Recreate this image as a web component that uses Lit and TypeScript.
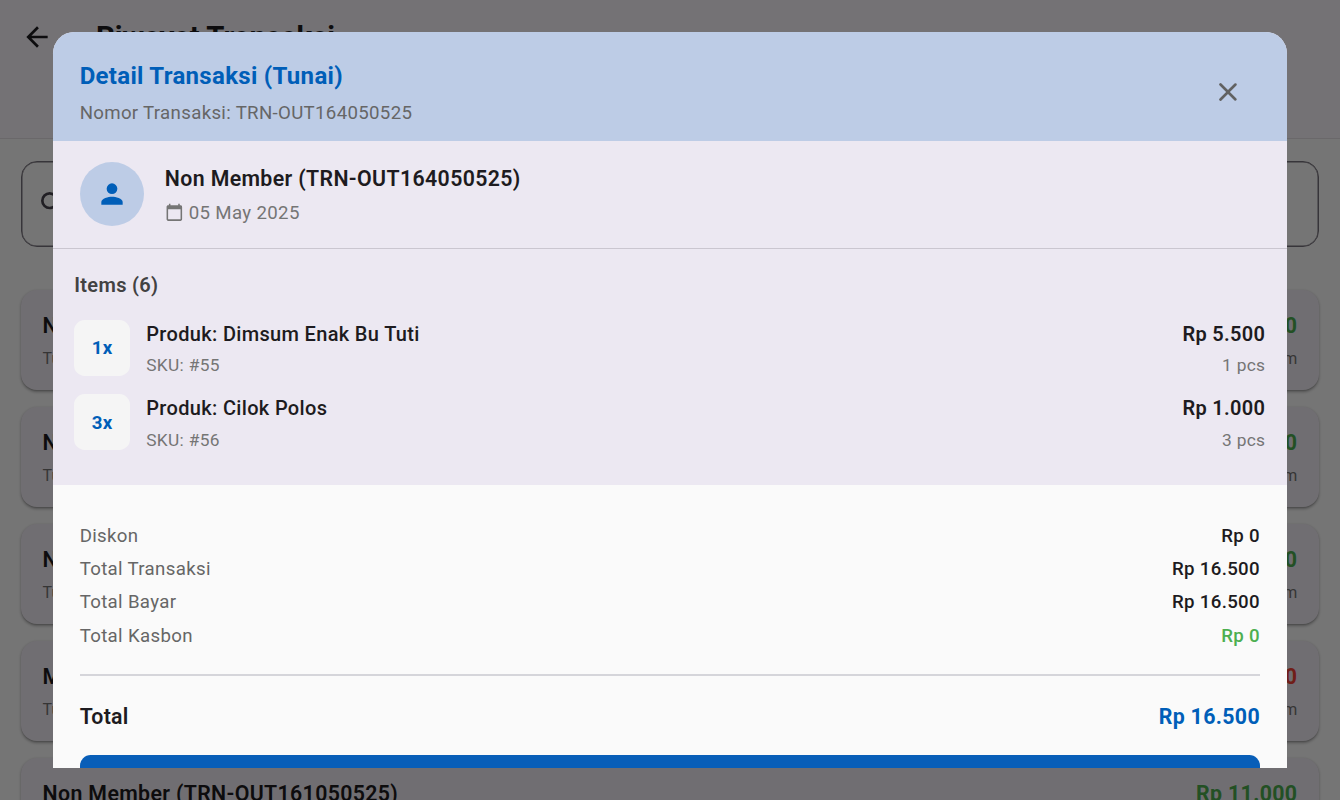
import { LitElement, html, css } from "lit";
import { customElement } from "lit/decorators.js";

interface Transaction {
  name: string;
  amount: string;
  debt?: boolean;
}

const transactions: Transaction[] = [
  { name: "Non Member (TRN-OUT165050525)", amount: "Rp 5.500" },
  { name: "Non Member (TRN-OUT164050525)", amount: "Rp 16.500" },
  { name: "Non Member (TRN-OUT163050525)", amount: "Rp 12.000" },
  { name: "Member (TRN-OUT162050525)", amount: "Rp 10.000", debt: true },
  { name: "Non Member (TRN-OUT161050525)", amount: "Rp 11.000" },
];

const items = [
  { qty: 1, name: "Produk: Dimsum Enak Bu Tuti", sku: "SKU: #55", price: "Rp 5.500" },
  { qty: 3, name: "Produk: Cilok Polos", sku: "SKU: #56", price: "Rp 1.000" },
];

const summary = [
  { label: "Diskon", value: "Rp 0" },
  { label: "Total Transaksi", value: "Rp 16.500" },
  { label: "Total Bayar", value: "Rp 16.500" },
  { label: "Total Kasbon", value: "Rp 0", paid: true },
];

@customElement("history-page")
export class HistoryPage extends LitElement {
  static styles = css`
    :host { display: block; background: #fff; color: #1d1b20; }
    * { box-sizing: border-box; }
    .bar {
      height: 139.3px; padding: 17px 26px 0 25px; background: #fdf9ff;
      border-bottom: 1.33px solid #e6e3e8; display: flex; align-items: flex-start; gap: 46px;
    }
    .back { width: 25px; height: 40px; display: flex; align-items: center; }
    .back svg { width: 32px; height: 32px; flex: none; margin-left: -4px; }
    .title { font-size: 29.33px; line-height: 40px; font-weight: 700; }
    .search {
      margin: 22px 21.3px 0; height: 85.3px; border: 1px solid #79747e; border-radius: 16px;
      box-shadow: inset 0 0 0 .5px #79747e;
      padding-left: 15px; display: flex; align-items: center; color: #49454f;
    }
    .search svg { width: 32px; height: 32px; }
    .list { padding: 43.3px 21.3px 0; display: flex; flex-direction: column; gap: 17px; }
    .card {
      height: 100px; border-radius: 16px; background: #f5f0f9; padding: 22px 21.3px 0;
      box-shadow: 0 1.5px 3px rgba(0,0,0,.3), 0 1px 1px rgba(0,0,0,.1);
    }
    .row { display: flex; justify-content: space-between; }
    .name { font-size: 21.33px; line-height: 28px; font-weight: 600; letter-spacing: .35px; }
    .amount { font-size: 21.33px; line-height: 28px; font-weight: 700; letter-spacing: .333px; color: #4caf50; }
    .debt { color: #f44336; }
    .meta { padding-top: 8px; font-size: 16px; line-height: 22px; color: #757575; }
  `;

  render() {
    return html`
      <header class="bar">
        <span class="back">
          <svg viewBox="0 0 24 24" fill="currentColor"><path d="M20 11H7.83l5.59-5.59L12 4l-8 8 8 8 1.41-1.41L7.83 13H20z" /></svg>
        </span>
        <div class="title">Riwayat Transaksi</div>
      </header>
      <div class="search">
        <svg viewBox="0 0 24 24" fill="currentColor"><path d="M15.5 14h-.79l-.28-.27A6.47 6.47 0 0 0 16 9.5 6.5 6.5 0 1 0 9.5 16c1.61 0 3.09-.59 4.23-1.57l.27.28v.79l5 4.99L20.49 19zM9.5 14a4.5 4.5 0 1 1 0-9 4.5 4.5 0 0 1 0 9z" /></svg>
      </div>
      <div class="list">
        ${transactions.map((t) => html`
          <article class="card">
            <div class="row">
              <span class="name">${t.name}</span>
              <span class="amount ${t.debt ? "debt" : ""}">${t.amount}</span>
            </div>
            <div class="row meta"><span>Tunai</span><span>1 item</span></div>
          </article>`)}
      </div>
    `;
  }
}

@customElement("transaction-dialog")
export class TransactionDialog extends LitElement {
  static styles = css`
    :host {
      display: block; overflow: hidden; border-radius: 21.33px 21.33px 0 0;
      background: #ece8f2; color: #1d1b20; letter-spacing: .333px;
    }
    * { box-sizing: border-box; }
    .head {
      height: 109.3px; padding: 26.7px 26.7px 0 26.3px; background: #bdcce6;
      display: flex; justify-content: space-between; align-items: flex-start;
    }
    .title { font-size: 24px; line-height: 34px; font-weight: 700; color: #005eb8; letter-spacing: .31px; }
    .number { font-size: 18.67px; line-height: 27px; margin-top: 7.3px; color: #666; letter-spacing: .32px; }
    .close { width: 64px; height: 64px; margin-top: 1px; display: grid; place-items: center; color: #616161; }
    .close svg { width: 32px; height: 32px; }
    .member {
      height: 108px; padding: 21.3px 26.7px 0 26.2px; border-bottom: 1.33px solid #cac6d0;
      display: flex; gap: 21.3px;
    }
    .avatar {
      width: 64px; height: 64px; border-radius: 50%; background: #bdcce6; color: #005eb8;
      display: grid; place-items: center; flex: none; margin-top: -.4px;
    }
    .avatar svg { width: 32px; height: 32px; }
    .member-name { font-size: 21.33px; line-height: 32px; font-weight: 600; letter-spacing: .36px; }
    .date { display: flex; align-items: center; gap: 5.3px; font-size: 18.67px; line-height: 27px; margin-top: 5px; color: #757575; }
    .date svg { width: 18.67px; height: 18.67px; margin-top: -1px; }
    .items { height: 235.4px; padding: 22px 21.3px 0 20.9px; }
    .items-title { font-size: 20px; line-height: 28px; font-weight: 600; color: #424242; }
    .item-list { display: flex; flex-direction: column; gap: 18.67px; padding-top: 20.5px; }
    .item { display: flex; height: 56px; gap: 16px; }
    .qty {
      width: 56px; height: 56px; border-radius: 10.67px; background: #f5f5f5; color: #005eb8;
      display: grid; place-items: center; font-size: 18.67px; font-weight: 700; padding-top: .6px;
    }
    .info { flex: 1; }
    .price { text-align: right; }
    .main { font-size: 20px; line-height: 28px; font-weight: 500; }
    .strong { font-weight: 600; }
    .sub { font-size: 17.33px; line-height: 22px; margin-top: 6.4px; color: #757575; }
    .summary { background: #fafafa; padding: 35px 26.7px 0 26.3px; height: 284px; }
    .line { display: flex; justify-content: space-between; font-size: 18.67px; line-height: 33.33px; color: #666; }
    .value { font-weight: 500; color: #1d1b20; }
    .paid { color: #4caf50; }
    .rule { height: 2px; background: #d5d5da; margin-top: 21.3px; }
    .total { display: flex; justify-content: space-between; font-size: 21.33px; line-height: 32px; font-weight: 600; margin-top: 25px; letter-spacing: .25px; }
    .sum { color: #005eb8; font-weight: 700; letter-spacing: .333px; }
    .print { display: block; width: 100%; height: 64px; border: 0; border-radius: 10.67px; margin-top: 22.1px; background: #085eb8; }
  `;

  render() {
    return html`
      <header class="head">
        <div>
          <div class="title">Detail Transaksi (Tunai)</div>
          <div class="number">Nomor Transaksi: TRN-OUT164050525</div>
        </div>
        <span class="close">
          <svg viewBox="0 0 24 24" fill="currentColor"><path d="M18.3 5.71a1 1 0 0 0-1.41 0L12 10.59 7.11 5.7A1 1 0 1 0 5.7 7.11L10.59 12 5.7 16.89a1 1 0 1 0 1.41 1.41L12 13.41l4.89 4.89a1 1 0 0 0 1.41-1.41L13.41 12l4.89-4.89a1 1 0 0 0 0-1.4z" /></svg>
        </span>
      </header>
      <section class="member">
        <span class="avatar">
          <svg viewBox="0 0 24 24" fill="currentColor"><circle cx="12" cy="8" r="4" /><path d="M12 14c-2.67 0-8 1.34-8 4v2h16v-2c0-2.66-5.33-4-8-4z" /></svg>
        </span>
        <div>
          <div class="member-name">Non Member (TRN-OUT164050525)</div>
          <div class="date">
            <svg viewBox="0 0 24 24" fill="currentColor"><path d="M20 3h-1V1h-2v2H7V1H5v2H4c-1.1 0-2 .9-2 2v16c0 1.1.9 2 2 2h16c1.1 0 2-.9 2-2V5c0-1.1-.9-2-2-2zm0 18H4V8h16v13z" /></svg>
            <span>05 May 2025</span>
          </div>
        </div>
      </section>
      <section class="items">
        <div class="items-title">Items (6)</div>
        <div class="item-list">
          ${items.map((i) => html`
            <div class="item">
              <span class="qty">${i.qty}x</span>
              <div class="info">
                <div class="main">${i.name}</div>
                <div class="sub">${i.sku}</div>
              </div>
              <div class="price">
                <div class="main strong">${i.price}</div>
                <div class="sub">${i.qty} pcs</div>
              </div>
            </div>`)}
        </div>
      </section>
      <section class="summary">
        ${summary.map((s) => html`
          <div class="line"><span>${s.label}</span><span class="value ${s.paid ? "paid" : ""}">${s.value}</span></div>`)}
        <div class="rule"></div>
        <div class="total"><span>Total</span><span class="sum">Rp 16.500</span></div>
        <button class="print"></button>
      </section>
    `;
  }
}

@customElement("app-root")
export class AppRoot extends LitElement {
  static styles = css`
    :host {
      display: block; position: relative; width: 100%; height: 800px; overflow: hidden;
      font-family: Roboto, "Liberation Sans", sans-serif;
    }
    .scrim {
      position: absolute; inset: 0; box-sizing: border-box; padding: 32px 53.33px;
      background: rgba(0, 0, 0, .54); display: grid;
    }
    .dialog { height: 736px; }
  `;

  render() {
    return html`
      <history-page></history-page>
      <div class="scrim"><transaction-dialog class="dialog"></transaction-dialog></div>
    `;
  }
}
